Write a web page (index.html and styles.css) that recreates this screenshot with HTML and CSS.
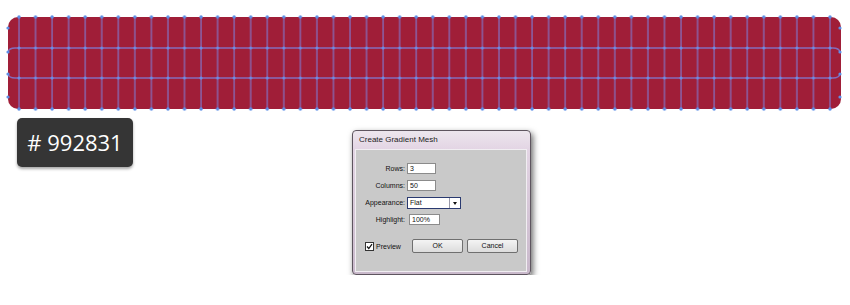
FILE: index.html
```html
<!DOCTYPE html>
<html>
<head>
<meta charset="utf-8">
<link rel="stylesheet" href="styles.css">
</head>
<body>
<svg class="mesh" width="850" height="112" viewBox="0 0 850 112" xmlns="http://www.w3.org/2000/svg">
  <defs>
    <pattern id="cols" patternUnits="userSpaceOnUse" x="17" y="0" width="16.551" height="112">
      <line x1="2" y1="17" x2="2" y2="109" stroke="#7d80dc" stroke-opacity="0.8" stroke-width="1.3"/>
      <circle cx="2" cy="17" r="1.7" fill="#5d8fe6"/>
      <circle cx="2" cy="48" r="1.5" fill="#6a8ee6"/>
      <circle cx="2" cy="78" r="1.5" fill="#6a8ee6"/>
      <circle cx="2" cy="109" r="1.7" fill="#5d8fe6"/>
    </pattern>
  </defs>
  <rect x="8" y="17" width="833" height="92" rx="10" ry="10" fill="#a01e38"/>
  <path d="M8,52 Q9,48 15,48 L833,48 Q839,48 840,52" fill="none" stroke="#7d80dc" stroke-opacity="0.8" stroke-width="1.3"/>
  <path d="M8,74 Q9,78 15,78 L833,78 Q839,78 840,74" fill="none" stroke="#7d80dc" stroke-opacity="0.8" stroke-width="1.3"/>
  <rect x="17" y="0" width="820" height="112" fill="url(#cols)"/>
  <g fill="#5d8fe6">
    <circle cx="8" cy="28" r="1.6"/><circle cx="8" cy="52" r="1.6"/><circle cx="8" cy="74" r="1.6"/><circle cx="8" cy="97" r="1.6"/>
    <circle cx="840" cy="28" r="1.6"/><circle cx="840" cy="52" r="1.6"/><circle cx="840" cy="74" r="1.6"/><circle cx="840" cy="97" r="1.6"/>
  </g>
</svg>
<div class="lower">
  <div class="swatch"># 992831</div>
  <div class="dialog">
    <div class="title">Create Gradient Mesh</div>
    <div class="panel">
      <div class="fields">
        <div class="lbl">Rows:</div><div class="input w29">3</div>
        <div class="lbl">Columns:</div><div class="input w29">50</div>
        <div class="lbl">Appearance:</div><div class="select"><span class="sel-text">Flat</span><span class="sel-arrow"></span></div>
        <div class="lbl">Highlight:</div><div class="input w31 shift">100%</div>
      </div>
      <div class="actions">
        <div class="check">
          <svg class="box" width="9" height="9" viewBox="0 0 9 9" xmlns="http://www.w3.org/2000/svg">
            <rect x="0.5" y="0.5" width="8" height="8" fill="#fff" stroke="#333"/>
            <path d="M2,4.5 L3.8,6.5 L7,2.2" fill="none" stroke="#111" stroke-width="1.2"/>
          </svg>
          <span>Preview</span>
        </div>
        <div class="btn">OK</div>
        <div class="btn">Cancel</div>
      </div>
    </div>
  </div>
</div>
</body>
</html>
```
FILE: styles.css
```css
html, body {
  margin: 0;
  padding: 0;
  background: #ffffff;
}
.mesh {
  display: block;
}
.lower {
  display: flex;
  align-items: flex-start;
  margin-top: 6px;
  padding-left: 17px;
}
.swatch {
  width: 116px;
  height: 49px;
  box-sizing: border-box;
  background: #353535;
  border-radius: 5px;
  box-shadow: 0 2px 3px rgba(0, 0, 0, 0.35);
  color: #ffffff;
  font-family: "Open Sans", sans-serif;
  font-size: 22px;
  line-height: 49px;
  text-align: center;
}
.dialog {
  margin-left: 219px;
  margin-top: 12px;
  width: 179px;
  height: 145px;
  box-sizing: border-box;
  border: 1px solid #5e555f;
  border-radius: 4px;
  background: linear-gradient(to bottom, #ece6ed 0, #e3d5e4 18px, #c9b9cb 100%);
  box-shadow: 2px 3px 6px rgba(0, 0, 0, 0.6);
  padding: 0 3px 2px 2px;
  display: flex;
  flex-direction: column;
  font-family: "Liberation Sans", Arial, sans-serif;
  color: #111;
}
.title {
  height: 18px;
  line-height: 18px;
  padding-left: 4px;
  font-size: 8px;
  color: #222;
}
.panel {
  flex: 1;
  background: #c9c9c9;
  border: 1px solid #f1eef2;
}
.fields {
  display: grid;
  grid-template-columns: 49px auto;
  grid-auto-rows: 12px;
  column-gap: 2px;
  row-gap: 5px;
  padding-top: 13px;
  justify-items: start;
}
.lbl {
  justify-self: end;
  font-size: 7px;
  line-height: 12px;
}
.input {
  height: 11px;
  box-sizing: border-box;
  background: #fff;
  border: 1px solid #8b8b8b;
  font-size: 7px;
  line-height: 9px;
  padding-left: 2px;
}
.w29 { width: 29px; }
.w31 { width: 31px; }
.shift { margin-left: 2px; }
.select {
  width: 54px;
  height: 12px;
  box-sizing: border-box;
  border: 1px solid #2a3a70;
  background: #fff;
  display: flex;
  font-size: 7px;
  line-height: 10px;
}
.sel-text {
  flex: 1;
  padding-left: 2px;
}
.sel-arrow {
  width: 10px;
  border-left: 1px solid #9a9aaa;
  display: flex;
  align-items: center;
  justify-content: center;
}
.sel-arrow::after {
  content: "";
  border-left: 2px solid transparent;
  border-right: 2px solid transparent;
  border-top: 3px solid #111;
}
.actions {
  display: flex;
  align-items: center;
  margin-top: 13px;
  padding-left: 9px;
}
.check {
  width: 47px;
  display: flex;
  align-items: center;
  gap: 2px;
  font-size: 7px;
}
.box {
  display: block;
}
.btn {
  width: 51px;
  height: 14px;
  box-sizing: border-box;
  border: 1px solid #6f6f6f;
  border-radius: 2px;
  background: linear-gradient(to bottom, #f4f4f4, #dcdcdc);
  font-size: 7px;
  line-height: 12px;
  text-align: center;
  margin-right: 4px;
}
```
